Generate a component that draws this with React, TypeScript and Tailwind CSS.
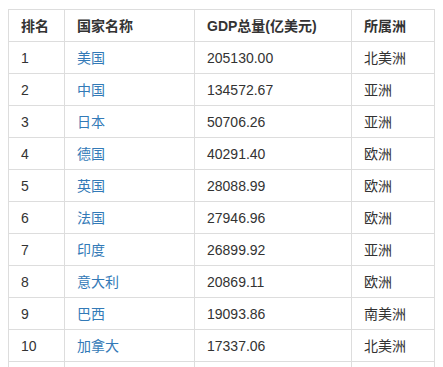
const rows = [
  { rank: 1, name: '美国', gdp: '205130.00', continent: '北美洲' },
  { rank: 2, name: '中国', gdp: '134572.67', continent: '亚洲' },
  { rank: 3, name: '日本', gdp: '50706.26', continent: '亚洲' },
  { rank: 4, name: '德国', gdp: '40291.40', continent: '欧洲' },
  { rank: 5, name: '英国', gdp: '28088.99', continent: '欧洲' },
  { rank: 6, name: '法国', gdp: '27946.96', continent: '欧洲' },
  { rank: 7, name: '印度', gdp: '26899.92', continent: '亚洲' },
  { rank: 8, name: '意大利', gdp: '20869.11', continent: '欧洲' },
  { rank: 9, name: '巴西', gdp: '19093.86', continent: '南美洲' },
  { rank: 10, name: '加拿大', gdp: '17337.06', continent: '北美洲' },
];

const cell = 'h-[32px] border border-[#ddd] px-3 py-0 align-middle';

export default function App() {
  return (
    <div
      className="h-[367px] overflow-hidden bg-white pt-[9px] pl-2 text-[14px] leading-5 text-[#333]"
      style={{ fontFamily: '"Liberation Sans", "Noto Sans CJK SC", sans-serif' }}
    >
      <table className="w-[427px] table-fixed border-collapse">
        <colgroup>
          <col className="w-[56px]" />
          <col className="w-[130px]" />
          <col className="w-[157px]" />
          <col />
        </colgroup>
        <thead>
          <tr>
            <th className={`${cell} text-left font-bold`}>排名</th>
            <th className={`${cell} text-left font-bold`}>国家名称</th>
            <th className={`${cell} text-left font-bold`}>GDP总量(亿美元)</th>
            <th className={`${cell} text-left font-bold`}>所属洲</th>
          </tr>
        </thead>
        <tbody>
          {rows.map((r) => (
            <tr key={r.rank}>
              <td className={cell}>{r.rank}</td>
              <td className={cell}>
                <a href="#" className="text-[#337ab7]">
                  {r.name}
                </a>
              </td>
              <td className={cell}>{r.gdp}</td>
              <td className={cell}>{r.continent}</td>
            </tr>
          ))}
          <tr>
            <td className={cell} />
            <td className={cell} />
            <td className={cell} />
            <td className={cell} />
          </tr>
        </tbody>
      </table>
    </div>
  );
}
